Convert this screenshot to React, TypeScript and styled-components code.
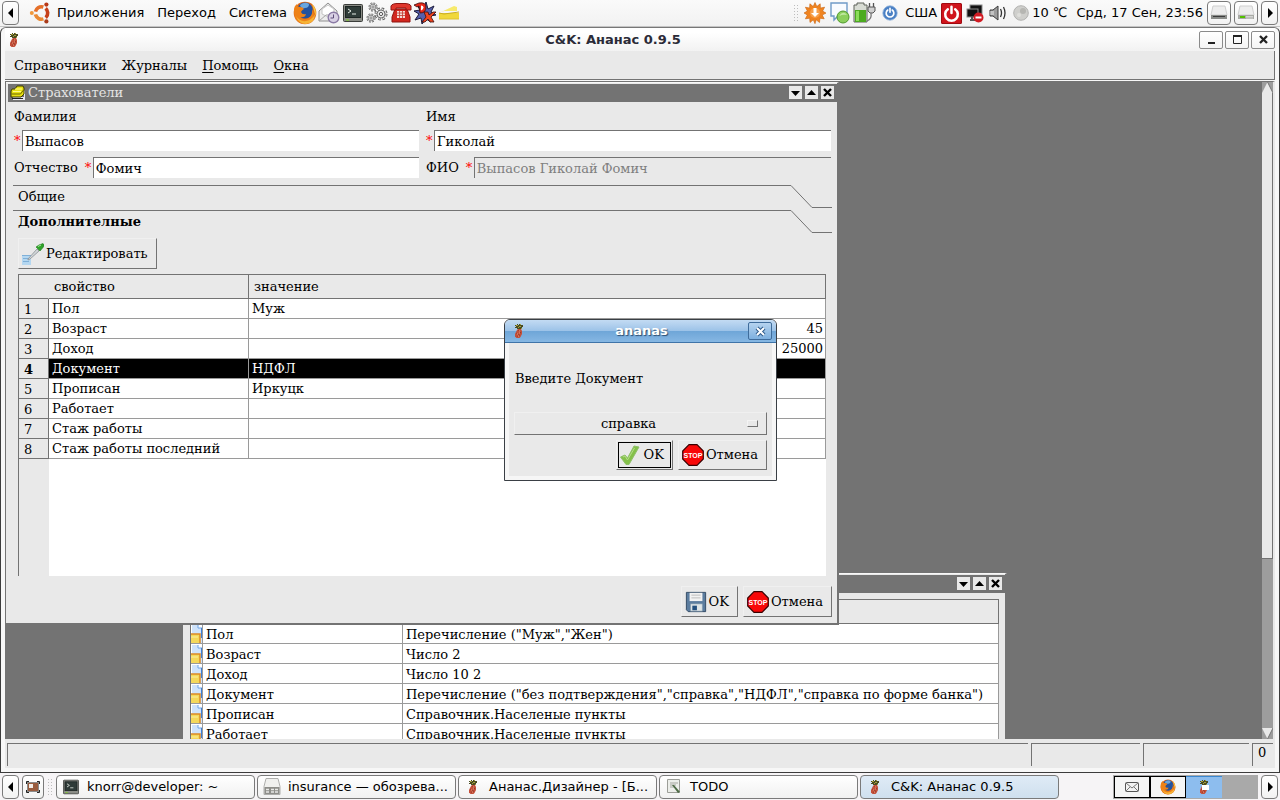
import React from "react";
import styled, { createGlobalStyle } from "styled-components";

const Global = createGlobalStyle`
  *, *::before, *::after { box-sizing: border-box; }
  body { margin: 0; background: #f5f5f5; }
  button, input, select { font: inherit; color: inherit; margin: 0; }
  button { cursor: pointer; }
  svg { display: block; flex: none; }
`;

const face = "#e9e9e9";
const shade = "#737373";
const grid = "#9a9a9a";
const sans = '"DejaVu Sans", sans-serif';
const serif = '"DejaVu Serif", serif';

/* ---------- desktop panels ---------- */

const Screen = styled.div`
  height: 100vh;
  display: flex;
  flex-direction: column;
  overflow: hidden;
  font: 13px/16px ${sans};
  color: #000;
`;

const Panel = styled.header`
  height: 27px;
  flex: none;
  display: flex;
  align-items: center;
  padding: 0 2px;
  background: linear-gradient(#fafafa, #f2f2f2);
  border-bottom: 1px solid #c4c4c4;
  white-space: nowrap;
`;

const TaskPanel = styled.footer`
  height: 27px;
  flex: none;
  display: flex;
  align-items: center;
  padding: 0 2px;
  background: #f6f4f6;
  white-space: nowrap;
`;

const Gap = styled.div`
  width: 3px;
  flex: none;
`;

const PanelButton = styled.button<{ $w: number }>`
  width: ${(p) => p.$w}px;
  height: 24px;
  flex: none;
  display: flex;
  align-items: center;
  justify-content: center;
  padding: 0;
  border: 1px solid #7a7a7a;
  border-radius: 4px;
  background: linear-gradient(#fff, #f2f2f2);
`;

const PanelMenu = styled.nav`
  display: flex;
  gap: 13px;
  padding-right: 6px;
`;

const MenuItem = styled.button`
  border: 0;
  padding: 0;
  background: none;
  u { text-underline-offset: 2px; }
`;

const Slot = styled.button<{ $w: number }>`
  width: ${(p) => p.$w}px;
  height: 24px;
  flex: none;
  display: flex;
  align-items: center;
  justify-content: center;
  border: 0;
  padding: 0;
  background: none;
`;

const Spacer = styled.div`
  flex: 1;
`;

const Grip = styled.div`
  width: 5px;
  height: 18px;
  flex: none;
  margin: 0 4px 0 3px;
  background: radial-gradient(circle, #bdbdbd 1px, transparent 1px) 0 0 / 3px 3px;
`;

const TrayText = styled.span<{ $before?: number; $after?: number }>`
  padding-left: ${(p) => p.$before ?? 0}px;
  padding-right: ${(p) => p.$after ?? 0}px;
`;

const Tasks = styled.div`
  flex: 1;
  display: flex;
  gap: 2px;
`;

const Task = styled.button<{ $active?: boolean }>`
  flex: 0 1 199px;
  height: 24px;
  min-width: 0;
  display: flex;
  align-items: center;
  gap: 8px;
  padding: 0 6px;
  text-align: left;
  border: 1px solid #7a7a7a;
  border-radius: 4px;
  background: ${(p) => (p.$active ? "linear-gradient(#dfebf6, #cfe0ee)" : "linear-gradient(#fff, #f1f1f1)")};
`;

const TaskIcon = styled.span`
  width: 16px;
  flex: none;
  display: flex;
  justify-content: center;
`;

const Pager = styled.div`
  display: flex;
  height: 24px;
  margin-right: 3px;
  padding: 1px 0 1px 1px;
  background: #a9a9a9;
`;

const Page = styled.button<{ $kind?: "active" | "empty" }>`
  width: 36px;
  display: flex;
  align-items: center;
  justify-content: center;
  padding: 0;
  border: ${(p) => (p.$kind ? "0" : "1px solid #000")};
  border-top: ${(p) => (p.$kind === "active" ? "1px solid #3b87cf" : p.$kind ? "0" : "1px solid #000")};
  background: ${(p) => (p.$kind === "active" ? "#8dbdee" : p.$kind === "empty" ? "#a9a9a9" : "#f5f5f5")};
`;

/* ---------- main window ---------- */

const MainWindow = styled.main`
  flex: 1;
  min-height: 0;
  display: flex;
  flex-direction: column;
  border: 1px solid #3c3c3c;
  border-top-color: #777;
  border-radius: 6px 6px 0 0;
  padding: 0 4px 4px;
  background: #f7f7f7;
`;

const MainTitle = styled.div`
  height: 23px;
  flex: none;
  display: flex;
  align-items: center;
  gap: 2px;
  background: linear-gradient(#fff 20%, #f2f2f2);
`;

const TitleText = styled.h1`
  flex: 1;
  margin: 0;
  padding-left: 4px;
  text-align: center;
  font-size: 13px;
  line-height: 16px;
  font-weight: bold;
  color: #2b2b38;
`;

const TitleButton = styled.button`
  width: 24px;
  height: 18px;
  display: flex;
  align-items: center;
  justify-content: center;
  padding: 0;
  border: 1px solid #8b8b8b;
  border-radius: 2px;
  background: linear-gradient(#fff, #f4f4f4);
`;

const MenuBar = styled.nav`
  height: 29px;
  flex: none;
  display: flex;
  align-items: center;
  gap: 15px;
  padding: 2px 9px 0;
  font-family: ${serif};
  background: ${face};
  border-right: 1px solid ${shade};
  border-bottom: 1px solid ${shade};
`;

const Workspace = styled.div`
  flex: 1;
  min-height: 0;
  display: flex;
  margin-top: 1px;
  border-top: 1px solid ${shade};
  border-left: 1px solid ${shade};
  border-right: 2px solid ${face};
  font-family: ${serif};
  background: ${shade};
`;

const Canvas = styled.div`
  flex: 1;
  position: relative;
  overflow: hidden;
`;

const ScrollBar = styled.div`
  width: 11px;
  flex: none;
  display: flex;
  flex-direction: column;
  justify-content: space-between;
  background: #9d9d9d;
`;

const Thumb = styled.div`
  flex: 0 0 71%;
  margin-bottom: auto;
  background: ${face};
  border-right: 1px solid ${shade};
  border-bottom: 1px solid ${shade};
`;

const StatusBar = styled.div`
  height: 29px;
  flex: none;
  display: flex;
  gap: 3px;
  padding: 4px 2px 2px;
  font-family: ${serif};
  background: ${face};
`;

const StatusCell = styled.div<{ $w?: number }>`
  flex: ${(p) => (p.$w ? `0 0 ${p.$w}px` : "1")};
  border-top: 1px solid ${shade};
  border-left: 1px solid ${shade};
  padding-left: 5px;
  line-height: 18px;
`;

/* ---------- inner windows ---------- */

const ChildWindow = styled.section<{ $x: number; $y: number; $w: number; $h: number }>`
  position: absolute;
  left: ${(p) => p.$x}px;
  top: ${(p) => p.$y}px;
  width: ${(p) => p.$w}px;
  height: ${(p) => p.$h}px;
  display: flex;
  flex-direction: column;
  padding: 1px 0 0 2px;
  background: ${face};
  border-top: 1px solid #f8f8f8;
  border-right: 2px solid ${shade};
  border-bottom: 2px solid ${shade};
`;

const ChildTitle = styled.div`
  height: 18px;
  flex: none;
  display: flex;
  align-items: center;
  gap: 3px;
  padding: 0 3px 1px 2px;
  color: #e4e4e4;
  background: ${shade};
`;

const ChildName = styled.h2`
  flex: 1;
  margin: 0;
  font-size: 13px;
  font-weight: normal;
  line-height: 16px;
`;

const ChildButton = styled.button`
  width: 13px;
  height: 13px;
  padding: 0;
  border: 0;
  background: ${face};
`;

const FormBody = styled.form`
  flex: 1;
  display: flex;
  flex-direction: column;
  padding: 4px 5px 6px 5px;
`;

const Fields = styled.div`
  display: grid;
  grid-template-columns: 1fr 1fr;
  gap: 6px 7px;
  padding: 0 1px;
`;

const Field = styled.div<{ $stack?: boolean }>`
  display: flex;
  flex-wrap: ${(p) => (p.$stack ? "wrap" : "nowrap")};
  align-items: center;
`;

const FieldLabel = styled.label<{ $stack?: boolean }>`
  flex: ${(p) => (p.$stack ? "0 0 100%" : "none")};
  line-height: 20px;
  padding-top: 1px;
  padding-right: 7px;
  padding-bottom: ${(p) => (p.$stack ? 3 : 0)}px;
`;

const Star = styled.span`
  flex: none;
  width: 8px;
  line-height: 20px;
  color: #ff0000;
`;

const TextBox = styled.input`
  flex: 1;
  min-width: 0;
  height: 21px;
  padding: 1px 2px 0;
  border: 0;
  border-top: 1px solid ${shade};
  border-left: 1px solid ${shade};
  border-radius: 0;
  outline: 0;
  background: #fff;
  &:disabled {
    color: #7f7f7f;
    background: ${face};
  }
`;

const ToolBox = styled.div`
  padding-top: 7px;
`;

const ToolTab = styled.button<{ $open?: boolean }>`
  width: 100%;
  height: 25px;
  display: flex;
  padding: 0;
  border: 0;
  text-align: left;
  font-weight: ${(p) => (p.$open ? "bold" : "normal")};
  background: none;
`;

const ToolTabText = styled.span`
  flex: 1;
  padding-left: 5px;
  line-height: 22px;
  border-top: 1px solid ${shade};
`;

const ToolPage = styled.div`
  flex: 1;
  display: flex;
  flex-direction: column;
  align-items: flex-start;
  gap: 5px;
  padding: 3px 6px 0 5px;
`;

const PushButton = styled.button<{ $tall?: boolean }>`
  height: ${(p) => (p.$tall ? 31 : 30)}px;
  display: flex;
  align-items: center;
  gap: 2px;
  padding: 0 8px 0 3px;
  border: 1px solid ${shade};
  border-top-color: #f0f0f0;
  border-left-color: #f0f0f0;
  background: ${face};
`;

const DefaultButton = styled(PushButton)`
  outline: 1px solid #000;
  outline-offset: -3px;
  gap: 4px;
`;

const ButtonRow = styled.div<{ $pad?: number }>`
  display: flex;
  justify-content: flex-end;
  gap: 5px;
  padding-top: ${(p) => p.$pad ?? 0}px;
`;

/* ---------- tables ---------- */

const TableArea = styled.div`
  flex: 1;
  align-self: stretch;
  border-top: 1px solid ${shade};
  border-left: 1px solid ${shade};
  background: linear-gradient(90deg, ${face} 30px, #fff 30px);
`;

const Table = styled.table`
  width: 100%;
  table-layout: fixed;
  border-collapse: separate;
  border-spacing: 0;
`;

const HeadCell = styled.th<{ $w?: number }>`
  width: ${(p) => (p.$w ? `${p.$w}px` : "auto")};
  height: 24px;
  padding: 0 5px;
  text-align: left;
  font-weight: normal;
  background: ${face};
  border-right: 1px solid ${shade};
  border-bottom: 1px solid ${shade};
`;

const CornerCell = styled(HeadCell)`
  border-color: ${face} ${face} ${shade};
`;

const RowHead = styled.th<{ $on?: boolean }>`
  height: 20px;
  padding: 2px 5px 0;
  text-align: left;
  line-height: 16px;
  font-weight: ${(p) => (p.$on ? "bold" : "normal")};
  background: ${face};
  border-right: 1px solid ${shade};
  border-bottom: 1px solid ${shade};
`;

const Cell = styled.td<{ $on?: boolean; $right?: boolean }>`
  height: 20px;
  padding: 0 2px 0 3px;
  line-height: 19px;
  white-space: nowrap;
  text-align: ${(p) => (p.$right ? "right" : "left")};
  color: ${(p) => (p.$on ? "#fff" : "#000")};
  background: ${(p) => (p.$on ? "#000" : "#fff")};
  border-right: 1px solid ${grid};
  border-bottom: 1px solid ${grid};
`;

const ListCell = styled(Cell)`
  padding-top: 2px;
  line-height: 17px;
`;

const IconCell = styled(Cell)`
  padding: 0;
`;

const ListBody = styled.div`
  margin: 6px 6px 0 5px;
  border-top: 1px solid ${shade};
  border-left: 1px solid ${shade};
`;

/* ---------- dialog ---------- */

const Dialog = styled.div`
  position: fixed;
  left: 504px;
  top: 319px;
  width: 273px;
  border: 1px solid #3a3f45;
  border-radius: 6px 6px 0 0;
  overflow: hidden;
  background: #f6f6f6;
`;

const DialogTitle = styled.div`
  height: 23px;
  display: flex;
  align-items: center;
  padding: 0 4px 0 8px;
  background: linear-gradient(#c3dbf3 0, #9dc3e8 48%, #6fa6d8 52%, #86b7e3);
  border-bottom: 1px solid #3f74a8;
`;

const DialogName = styled.h2`
  flex: 1;
  margin: 0;
  padding-left: 10px;
  text-align: center;
  font-size: 13px;
  line-height: 16px;
  color: #fff;
  text-shadow: 1px 1px 1px #2b4c70;
`;

const DialogClose = styled.button`
  width: 24px;
  height: 18px;
  display: flex;
  align-items: center;
  justify-content: center;
  padding: 0;
  border: 1px solid #3f6c9b;
  border-radius: 2px;
  background: linear-gradient(#b5d3ef, #7db0df);
`;

const DialogBody = styled.form`
  margin: 0 4px 4px;
  padding: 28px 5px 6px 5px;
  font-family: ${serif};
  background: ${face};
`;

const Prompt = styled.label`
  display: block;
  padding: 0 1px;
  margin-bottom: 25px;
`;

const SelectBox = styled.div`
  position: relative;
`;

const Select = styled.select`
  display: block;
  width: 100%;
  height: 23px;
  padding: 0 24px 0 0;
  appearance: none;
  text-align: center;
  text-align-last: center;
  border: 1px solid ${shade};
  border-top-color: #f0f0f0;
  border-left-color: #f0f0f0;
  border-radius: 0;
  background: ${face};
`;

const SelectMark = styled.span`
  position: absolute;
  right: 9px;
  top: 8px;
  width: 11px;
  height: 7px;
  pointer-events: none;
  border: 1px solid ${shade};
  border-top-color: #f4f4f4;
  border-left-color: #f4f4f4;
`;

/* ---------- icons ---------- */

const Pineapple = () => (
  <svg width="12" height="16" viewBox="0 0 12 16">
    <path d="M2 2h2V1h1v1h1V1h2v1h2v2H9v2H4V5H2V4h1V3H2z" fill="#4a4c22" />
    <path d="M3 2h2v1H3zM6 3h2v1H6zM5 4h1v1H5zM7 1h1v1H7zM8 5h1v1H8z" fill="#a5a03a" />
    <path d="M4 7l1-1h3l1 2v3l-1.500 3-1 1H3.500L2 13.500V11z" fill="#c4503a" />
    <path d="M3 10l4 3M5 7l3 3M8 9l-4 5" stroke="#8c3628" strokeWidth=".6" />
    <path d="M4 11h1M6 10h1M5 13h1M6 8h1" stroke="#f0997a" />
  </svg>
);

const Triangle = ({ dir }: { dir: "left" | "right" }) => (
  <svg width="6" height="10" viewBox="0 0 6 10">
    <path d={dir === "left" ? "M5 0v10L0 5z" : "M1 0v10l5-5z"} />
  </svg>
);

const Ubuntu = () => (
  <svg width="22" height="22" viewBox="0 0 22 22">
    {[
      [192, "#e5702a"],
      [312, "#c6401a"],
      [72, "#ea8a34"],
    ].map(([angle, color]) => (
      <circle
        key={color}
        cx="12.500"
        cy="11"
        r="6.200"
        fill="none"
        stroke={color as string}
        strokeWidth="3.600"
        pathLength={360}
        strokeDasharray="96 264"
        transform={`rotate(${angle} 12.500 11)`}
      />
    ))}
    <circle cx="2.800" cy="11" r="2" fill="#f0983c" />
    <circle cx="17.400" cy="2.600" r="2.100" fill="#b93a18" />
    <circle cx="17.400" cy="19.400" r="2.100" fill="#a93c1c" />
  </svg>
);

const Firefox = ({ size = 24 }: { size?: number }) => (
  <svg width={size} height={size} viewBox="0 0 24 24">
    <circle cx="12" cy="12" r="11.300" fill="#e06a18" />
    <circle cx="12" cy="9.500" r="8" fill="#24529e" />
    <path d="M7 4q5-4 9-1 0 4-4 4-4 1-5-3z" fill="#6aa6de" />
    <path d="M1 9q0-4 3-6 0 3 3 3 3 0 4 2-2 1-3 3 1 3 5 2-1 4-6 3 4 4 9 1 4-3 3-9 3 5 1 9-3 6-9 6Q1 22 1 9z" fill="#ee8218" />
    <path d="M3 15q4 6 10 5 6-1 9-7 0 9-9 10-7 0-10-8z" fill="#f6b436" />
    <path d="M19 3q5 5 3.500 12Q21 9 19 3z" fill="#f8c840" />
  </svg>
);

const MailClock = () => (
  <svg width="22" height="22" viewBox="0 0 22 22">
    <path d="M1 9L10 1l9 8v10H1z" fill="#ececec" stroke="#8f8f8f" />
    <path d="M4 7l6-4 6 4v5l-6 3-6-3z" fill="#fff" stroke="#c5c5c5" />
    <path d="M1 19l7-6h4l7 6" fill="none" stroke="#a5a5a5" />
    <circle cx="15.500" cy="15.500" r="5.300" fill="#d8d0e4" stroke="#8b7ba5" strokeWidth="1.400" />
    <path d="M15.500 12.500v3.500h-3" stroke="#5d4c78" fill="none" />
  </svg>
);

const Terminal = ({ size = 20 }: { size?: number }) => (
  <svg width={size} height={size} viewBox="0 0 20 20">
    <rect x=".5" y="1.500" width="19" height="17" rx="1" fill="#8b8d87" stroke="#3b3d3a" />
    <rect x="2.500" y="3.500" width="15" height="11" fill="#2f3b38" stroke="#1d2523" />
    <path d="M5 6l3 2-3 2M9 11h4" stroke="#e6eee6" fill="none" />
    <path d="M3 17h3" stroke="#7ed321" />
  </svg>
);

const Gear = ({ x, y, s }: { x: number; y: number; s: number }) => (
  <g transform={`translate(${x} ${y}) scale(${s})`}>
    <circle r="5" fill="none" stroke="#5a5a5a" strokeWidth="3" strokeDasharray="2.300 1.630" />
    <circle r="5" fill="none" stroke="#e2e2e2" strokeWidth="1.400" strokeDasharray="1.500 2.430" strokeDashoffset="-.4" />
    <circle r="4" fill="#e7e7e7" stroke="#666" strokeWidth=".9" />
    <circle r="1.600" fill="#fff" stroke="#555" />
  </g>
);

const Gears = () => (
  <svg width="22" height="22" viewBox="0 0 22 22">
    <Gear x={7} y={5} s={0.7} />
    <Gear x={5} y={16} s={0.7} />
    <Gear x={15} y={12} s={1} />
  </svg>
);

const Phone = () => (
  <svg width="22" height="20" viewBox="0 0 22 20">
    <path d="M5 6h12l3 8v5H2v-5z" fill="#d2271f" stroke="#8e1510" />
    <path d="M1 3q1-3 10-2.500 9-.5 10 2.500v4h-5V5H6v2H1z" fill="#e0382e" stroke="#8e1510" />
    <rect x="7" y="8" width="8" height="7" fill="#f6dcd8" />
    <path d="M7 10h8M7 12.500h8M9.500 8v7M12.500 8v7" stroke="#c03a30" strokeWidth=".8" />
  </svg>
);

const Burst = () => (
  <svg width="24" height="24" viewBox="0 0 24 24">
    <path d="M4 4l6 4 3-7 2 7 6-3-3 6 5 3-6 1 1 6-5-3-4 5-1-6-6 2 4-6-5-3 6-1z" fill="#5560ae" stroke="#1c1c3c" />
    <path d="M1 4l5-2q7-1 7 4 0 6-6 6L6 5 4 6z" fill="#e8281a" stroke="#3a0c0c" strokeWidth=".8" />
    <path d="M8 4.500v5q2.500-1 2.500-3T8 4.500z" fill="#fff" />
    <path d="M11 11l4 0 1 3 4-3h3l-5 5 3 5h-4l-2-3-3 3h-3l4-5z" fill="#f0441e" stroke="#3a0c0c" strokeWidth=".8" />
  </svg>
);

const Note = () => (
  <svg width="22" height="16" viewBox="0 0 22 16">
    <path d="M1 8l15-7 3 1v4H6z" fill="#f7ea6c" />
    <path d="M1 8h20v6H1z" fill="#f0d83a" />
    <path d="M1 8l5 1 15-2" stroke="#c9ae22" fill="none" />
    <path d="M1 14h20" stroke="#dcc030" />
  </svg>
);

const Update = () => (
  <svg width="22" height="22" viewBox="0 0 22 22">
    <path d="M11 .5l1.800 4 3.400-2.700.2 4.300 4.200-.9-2 3.900 3.400 2-3.800 1.900 2 3.800-4.300-.6-.4 4.300-3.300-2.700L11 21.700l-1.700-3.900L6 20.500l-.3-4.300-4.300.6 2-3.800L0 11l3.400-2-2-3.800 4.200.9.300-4.300 3.300 2.700z" fill="#f08420" stroke="#c8620c" strokeWidth=".6" />
    <circle cx="11" cy="11" r="5" fill="#f7a04a" />
    <path d="M9.500 6h3v5H15l-4 4-4-4h2.500z" fill="#fff" />
  </svg>
);

const Chat = () => (
  <svg width="22" height="22" viewBox="0 0 22 22">
    <path d="M2 1h16v13H9l-4 4v-4H2z" fill="#f8fbff" stroke="#6f9bc8" strokeWidth="1.400" />
    <circle cx="14" cy="15" r="6" fill="#8ccf5c" stroke="#4f9a2c" />
    <path d="M10 14q4-6 8-1-4-1-8 1z" fill="#c0e8a0" />
  </svg>
);

const Battery = () => (
  <svg width="24" height="22" viewBox="0 0 24 22">
    <path d="M4 1h7v2h3v17H1V3h3z" fill="#d8dcd4" stroke="#5e625a" />
    <rect x="2" y="8" width="11" height="12" fill="#4cab20" />
    <path d="M3 9h3v10H3z" fill="#8bdc5a" />
    <path d="M15 5h7v4l-2 2h-3l-2-2z" fill="#d0d0d0" stroke="#555" />
    <path d="M18 11q1 6-4 8" fill="none" stroke="#777" strokeWidth="1.300" />
    <path d="M16.500 5V1M20.500 5V1" stroke="#555" strokeWidth="1.300" />
  </svg>
);

const PowerGlyph = ({ stroke, w }: { stroke: string; w: number }) => (
  <g fill="none" stroke={stroke} strokeWidth={w} strokeLinecap="round">
    <path d="M6.500 6A6 6 0 1 0 13.500 6" />
    <path d="M10 3.500v6" />
  </g>
);

const PowerBlue = () => (
  <svg width="16" height="16" viewBox="0 0 20 20">
    <circle cx="10" cy="10" r="9" fill="#4a80c4" stroke="#8fb2dc" />
    <g transform="translate(2 1.500) scale(.8)"><PowerGlyph stroke="#fff" w={2.6} /></g>
  </svg>
);

const PowerRed = () => (
  <svg width="21" height="21" viewBox="0 0 20 20">
    <rect x=".5" y=".5" width="19" height="19" rx="1" fill="#d0141c" stroke="#a00a10" />
    <PowerGlyph stroke="#fff" w={2.4} />
  </svg>
);

const Network = () => (
  <svg width="18" height="19" viewBox="0 0 18 19">
    <rect x="4" y="1" width="12" height="9" fill="#111" stroke="#8a8a8a" />
    <rect x="1" y="5" width="11" height="8" fill="#111" stroke="#8a8a8a" />
    <path d="M4 16h6M6 13v3" stroke="#555" strokeWidth="2" />
    <circle cx="12.500" cy="13.500" r="5" fill="#d11a22" />
    <path d="M9.500 13.500h6" stroke="#fff" strokeWidth="2" />
  </svg>
);

const Speaker = () => (
  <svg width="17" height="16" viewBox="0 0 17 16">
    <path d="M1 5h3l5-4v14l-5-4H1z" fill="#9c9c9c" stroke="#3a3a3a" />
    <path d="M2 6v4M4 6v4" stroke="#fff" strokeWidth=".8" />
    <path d="M11.500 4q2 4 0 8M14.500 2q3 6 0 12" fill="none" stroke="#333" strokeWidth="1.300" />
  </svg>
);

const Moon = () => (
  <svg width="16" height="16" viewBox="0 0 16 16">
    <circle cx="8" cy="8" r="7.300" fill="#cfcfcc" stroke="#b2b2b0" />
    <circle cx="10" cy="6" r="3" fill="#b6b6b2" />
    <circle cx="6" cy="10" r="2" fill="#dededb" />
  </svg>
);

const Drive = ({ light }: { light?: boolean }) => (
  <svg width="18" height="16" viewBox="0 0 18 16">
    <path d="M3 1h12l2 9H1z" fill="#ededed" stroke="#cfcfcf" />
    <path d="M1 10h16v4H1z" fill={light ? "#a9aba6" : "#8a8c89"} />
    <path d={light ? "M9 11.500h7M9 13h7" : "M3 11.500h12"} stroke={light ? "#d5d5d5" : "#3c3c3c"} />
    {light && <path d="M3 12h5" stroke="#52c000" strokeWidth="2" />}
  </svg>
);

const ShowDesktop = () => (
  <svg width="14" height="12" viewBox="0 0 14 12">
    <rect x="1.500" y="1.500" width="11" height="9" fill="#9a5c3e" stroke="#8a8a8a" />
    <path d="M.5 3V.500H3M11 .500h2.500V3M13.500 9v2.500H11M3 11.500H.500V9" fill="none" stroke="#222" />
    <rect x="3" y="3" width="4" height="4" fill="#f3ece6" />
  </svg>
);

const Cabinet = () => (
  <svg width="18" height="17" viewBox="0 0 18 17">
    <path d="M3 .500h12l2 8v8H1v-8z" fill="#f0f0ee" stroke="#aeaeac" />
    <path d="M1.500 9h15v7h-15z" fill="#8e8e8a" />
    <path d="M3 11.500h3M8 11.500h3M12 11.500h3M3 14h3M8 14h3M12 14h3" stroke="#e9e9e7" strokeWidth="1.500" />
  </svg>
);

const Editor = () => (
  <svg width="14" height="15" viewBox="0 0 14 15">
    <path d="M.5.500h12v13H.5z" fill="#eceeea" stroke="#9c9e98" />
    <path d="M3 4h8M3 6h6M3 8h4" stroke="#a4a69f" />
    <path d="M5 6l6 8 2-1-6-7z" fill="#4c6a44" />
  </svg>
);

const Envelope = () => (
  <svg width="14" height="10" viewBox="0 0 14 10">
    <rect x=".5" y=".5" width="13" height="9" rx="1" fill="#f2f2f2" stroke="#555" />
    <path d="M1 1l6 5 6-5M1 9l4-4M13 9L9 5" fill="none" stroke="#777" />
  </svg>
);

const Folder = () => (
  <svg width="15" height="15" viewBox="0 0 15 15">
    <path d="M3 12h11V5l1 1v9H3z" fill="#e6e6f2" />
    <path d="M2 4l3 0 2-3h6l1 2v6l-3 3H1V6z" fill="#e8e012" stroke="#3c3a00" />
    <path d="M5 4h7M3 6.500h8" stroke="#fffb8a" />
    <path d="M1.500 9h9l3-4" fill="none" stroke="#6a6600" />
    <path d="M2 13.500h11" stroke="#222" />
  </svg>
);

const Dropper = () => (
  <svg width="22" height="22" viewBox="0 0 22 22">
    <rect x="0" y="12" width="9" height="10" fill="#b5d7f0" />
    <path d="M0 12.500h9M1 15.500h6M1 18.500h6" stroke="#7fb0d8" />
    <path d="M6 16l9-10 2 2-9 8-2 1z" fill="#d2d6d8" stroke="#8a9094" strokeWidth=".8" />
    <path d="M14 4l3-2 4-1.500q2 1 0 4l-3 3.500z" fill="#2fa32a" stroke="#1c7a1a" strokeWidth=".6" />
    <path d="M16 3.500l3-1.500" stroke="#a6e89a" />
  </svg>
);

const Floppy = () => (
  <svg width="22" height="22" viewBox="0 0 24 24">
    <path d="M1.500 1.500h21v21h-19l-2-2z" fill="#5c7d9f" stroke="#2f4660" />
    <rect x="5" y="2" width="14" height="9" fill="#f2f2f2" />
    <path d="M7 4.500h10M7 7.500h10" stroke="#b9b9b9" />
    <path d="M6 14h13v8H6z" fill="#dfe5e6" stroke="#7d95a8" strokeWidth=".6" />
    <rect x="8" y="16" width="5" height="5" fill="#24507e" />
  </svg>
);

const Check = () => (
  <svg width="20" height="22" viewBox="0 0 20 22">
    <path d="M0.500 13l4.500-2 2.500 3L14 2l5 1L9 20.500H6z" fill="#84c04a" stroke="#8fbf6a" />
    <path d="M3 13l2-1 2.500 4 7-12" fill="none" stroke="#b4de88" />
  </svg>
);

const StopWord = styled.text`
  font: bold 7px "Liberation Sans Narrow", "Liberation Sans", sans-serif;
  fill: #fff;
`;

const Stop = () => (
  <svg width="22" height="22" viewBox="0 0 22 22">
    <path d="M7 .700h8L21.300 7v8L15 21.300H7L.700 15V7z" fill="#f80808" stroke="#3a0000" strokeWidth="1.200" />
    <StopWord x="11" y="14" textAnchor="middle">STOP</StopWord>
  </svg>
);

const DocIcon = () => (
  <svg width="11" height="19" viewBox="0 0 11 19">
    <path d="M1 1h6l4 3v15H1z" fill="#cfe3fa" />
    <path d="M7 1v3h4" fill="#fff" stroke="#6ca3e6" />
    <path d="M10.500 4v10" stroke="#3e7fd4" />
    <rect x="0" y="10" width="9" height="9" fill="#f4d85a" />
    <path d="M0 10h9v9" fill="none" stroke="#dd8b26" strokeWidth="1.500" />
    <path d="M0 13h7" stroke="#fbeea0" />
  </svg>
);

const ChildControls = () => (
  <>
    <ChildButton type="button" aria-label="Свернуть">
      <svg width="13" height="13" viewBox="0 0 13 13"><path d="M2 5h9l-4.500 5z" /></svg>
    </ChildButton>
    <ChildButton type="button" aria-label="Развернуть">
      <svg width="13" height="13" viewBox="0 0 13 13"><path d="M2 9h9L6.500 4z" /></svg>
    </ChildButton>
    <ChildButton type="button" aria-label="Закрыть">
      <svg width="13" height="13" viewBox="0 0 13 13"><path d="M3 3l7 7M10 3l-7 7" stroke="#000" strokeWidth="2.400" /></svg>
    </ChildButton>
  </>
);

const Fold = () => (
  <svg width="41" height="24" viewBox="0 0 41 24">
    <path d="M0 .5L21 22.500H41" fill="none" stroke={shade} />
  </svg>
);

/* ---------- data ---------- */

const properties: { name: string; value: string; num?: boolean }[] = [
  { name: "Пол", value: "Муж" },
  { name: "Возраст", value: "45", num: true },
  { name: "Доход", value: "25000", num: true },
  { name: "Документ", value: "НДФЛ" },
  { name: "Прописан", value: "Иркуцк" },
  { name: "Работает", value: "" },
  { name: "Стаж работы", value: "" },
  { name: "Стаж работы последний", value: "" },
];

const types = [
  ["Пол", 'Перечисление ("Муж","Жен")'],
  ["Возраст", "Число 2"],
  ["Доход", "Число 10 2"],
  ["Документ", 'Перечисление ("без подтверждения","справка","НДФЛ","справка по форме банка")'],
  ["Прописан", "Справочник.Населеные пункты"],
  ["Работает", "Справочник.Населеные пункты"],
];

const tasks = [
  { title: "knorr@developer: ~", icon: <Terminal size={16} /> },
  { title: "insurance — обозрева...", icon: <Cabinet /> },
  { title: "Ананас.Дизайнер - [Б...", icon: <Pineapple /> },
  { title: "TODO", icon: <Editor /> },
  { title: "C&K: Ананас 0.9.5", icon: <Pineapple />, active: true },
];

export default function App() {
  return (
    <Screen>
      <Global />
      <Panel>
        <PanelButton $w={17} aria-label="Скрыть панель"><Triangle dir="left" /></PanelButton>
        <Gap />
        <Slot $w={35} aria-label="Ubuntu"><Ubuntu /></Slot>
        <PanelMenu>
          <MenuItem>Приложения</MenuItem>
          <MenuItem>Переход</MenuItem>
          <MenuItem>Система</MenuItem>
        </PanelMenu>
        <Slot $w={24} aria-label="Firefox"><Firefox /></Slot>
        <Slot $w={24} aria-label="Почта"><MailClock /></Slot>
        <Slot $w={24} aria-label="Терминал"><Terminal /></Slot>
        <Slot $w={24} aria-label="Настройки"><Gears /></Slot>
        <Slot $w={24} aria-label="Телефон"><Phone /></Slot>
        <Slot $w={24} aria-label="Dx"><Burst /></Slot>
        <Slot $w={24} aria-label="Заметки"><Note /></Slot>
        <Spacer />
        <Grip />
        <Slot $w={25} aria-label="Обновления"><Update /></Slot>
        <Slot $w={25} aria-label="Сообщения"><Chat /></Slot>
        <Slot $w={25} aria-label="Батарея"><Battery /></Slot>
        <Slot $w={25} aria-label="Питание"><PowerBlue /></Slot>
        <TrayText $before={3} $after={3}>США</TrayText>
        <Slot $w={23} aria-label="Выход"><PowerRed /></Slot>
        <Slot $w={23} aria-label="Сеть"><Network /></Slot>
        <Slot $w={23} aria-label="Громкость"><Speaker /></Slot>
        <Slot $w={23} aria-label="Погода"><Moon /></Slot>
        <TrayText>10 ℃</TrayText>
        <TrayText $before={9} $after={4}>Срд, 17 Сен, 23:56</TrayText>
        <PanelButton $w={24} aria-label="Диск 1"><Drive /></PanelButton>
        <Gap />
        <PanelButton $w={24} aria-label="Диск 2"><Drive light /></PanelButton>
        <Gap />
        <PanelButton $w={17} aria-label="Скрыть панель вправо"><Triangle dir="right" /></PanelButton>
      </Panel>

      <MainWindow>
        <MainTitle>
          <Slot $w={18} aria-label="Меню окна"><Pineapple /></Slot>
          <TitleText>C&amp;K: Ананас 0.9.5</TitleText>
          <TitleButton aria-label="Свернуть окно">
            <svg width="9" height="9" viewBox="0 0 9 9"><path d="M1 8h7" stroke="#222" strokeWidth="2" /></svg>
          </TitleButton>
          <TitleButton aria-label="Развернуть окно">
            <svg width="9" height="9" viewBox="0 0 9 9"><path d="M.5 1h8v7.500h-8z" fill="none" stroke="#222" /><path d="M0 1h9" stroke="#222" strokeWidth="2" /></svg>
          </TitleButton>
          <TitleButton aria-label="Закрыть окно">
            <svg width="9" height="9" viewBox="0 0 9 9"><path d="M1 1l7 7M8 1L1 8" stroke="#222" strokeWidth="2.300" /></svg>
          </TitleButton>
        </MainTitle>

        <MenuBar>
          <MenuItem>Справочники</MenuItem>
          <MenuItem>Журналы</MenuItem>
          <MenuItem><u>П</u>омощь</MenuItem>
          <MenuItem><u>О</u>кна</MenuItem>
        </MenuBar>

        <Workspace>
          <Canvas>
            <ChildWindow $x={177} $y={491} $w={824} $h={220}>
              <ChildTitle>
                <ChildName />
                <ChildControls />
              </ChildTitle>
              <ListBody>
                <Table>
                  <thead>
                    <tr>
                      <HeadCell $w={12} />
                      <HeadCell $w={200} />
                      <HeadCell />
                    </tr>
                  </thead>
                  <tbody>
                    {types.map(([name, type]) => (
                      <tr key={name}>
                        <IconCell><DocIcon /></IconCell>
                        <ListCell>{name}</ListCell>
                        <ListCell>{type}</ListCell>
                      </tr>
                    ))}
                  </tbody>
                </Table>
              </ListBody>
            </ChildWindow>

            <ChildWindow $x={0} $y={0} $w={833} $h={543}>
              <ChildTitle>
                <Folder />
                <ChildName>Страхователи</ChildName>
                <ChildControls />
              </ChildTitle>
              <FormBody onSubmit={(e) => e.preventDefault()}>
                <Fields>
                  <Field $stack>
                    <FieldLabel $stack htmlFor="surname">Фамилия</FieldLabel>
                    <Star>*</Star>
                    <TextBox id="surname" defaultValue="Выпасов" />
                  </Field>
                  <Field $stack>
                    <FieldLabel $stack htmlFor="name">Имя</FieldLabel>
                    <Star>*</Star>
                    <TextBox id="name" defaultValue="Гиколай" />
                  </Field>
                  <Field>
                    <FieldLabel htmlFor="patronymic">Отчество</FieldLabel>
                    <Star>*</Star>
                    <TextBox id="patronymic" defaultValue="Фомич" />
                  </Field>
                  <Field>
                    <FieldLabel htmlFor="fullname">ФИО</FieldLabel>
                    <Star>*</Star>
                    <TextBox id="fullname" disabled defaultValue="Выпасов Гиколай Фомич" />
                  </Field>
                </Fields>
                <ToolBox>
                  <ToolTab type="button"><ToolTabText>Общие</ToolTabText><Fold /></ToolTab>
                  <ToolTab type="button" $open><ToolTabText>Дополнителные</ToolTabText><Fold /></ToolTab>
                </ToolBox>
                <ToolPage>
                  <PushButton type="button" $tall><Dropper />Редактировать</PushButton>
                  <TableArea>
                    <Table>
                      <thead>
                        <tr>
                          <CornerCell $w={30} />
                          <HeadCell $w={200}>свойство</HeadCell>
                          <HeadCell>значение</HeadCell>
                        </tr>
                      </thead>
                      <tbody>
                        {properties.map((p, i) => {
                          const on = p.name === "Документ";
                          return (
                            <tr key={p.name}>
                              <RowHead scope="row" $on={on}>{i + 1}</RowHead>
                              <Cell $on={on}>{p.name}</Cell>
                              <Cell $on={on} $right={p.num}>{p.value}</Cell>
                            </tr>
                          );
                        })}
                      </tbody>
                    </Table>
                  </TableArea>
                </ToolPage>
                <ButtonRow $pad={10}>
                  <PushButton $tall><Floppy />OK</PushButton>
                  <PushButton type="button" $tall><Stop />Отмена</PushButton>
                </ButtonRow>
              </FormBody>
            </ChildWindow>
          </Canvas>
          <ScrollBar>
            <svg width="11" height="11" viewBox="0 0 11 11"><path d="M0 11L5.500 0 11 11z" fill={face} /><path d="M5.500 0L11 11" stroke={shade} /></svg>
            <Thumb />
            <svg width="11" height="11" viewBox="0 0 11 11"><path d="M0 0h11L5.500 11z" fill={face} /><path d="M5.500 11L11 0" stroke={shade} /></svg>
          </ScrollBar>
        </Workspace>

        <StatusBar>
          <StatusCell />
          <StatusCell $w={109} />
          <StatusCell $w={106} />
          <StatusCell $w={21}>0</StatusCell>
        </StatusBar>
      </MainWindow>

      <TaskPanel>
        <PanelButton $w={17} aria-label="Скрыть панель задач"><Triangle dir="left" /></PanelButton>
        <Gap />
        <PanelButton $w={22} aria-label="Показать рабочий стол"><ShowDesktop /></PanelButton>
        <Grip />
        <Tasks>
          {tasks.map((t) => (
            <Task key={t.title} $active={t.active}>
              <TaskIcon>{t.icon}</TaskIcon>
              {t.title}
            </Task>
          ))}
        </Tasks>
        <Pager>
          <Page aria-label="Рабочее место 1"><Envelope /></Page>
          <Page aria-label="Рабочее место 2"><Firefox size={16} /></Page>
          <Page $kind="active" aria-label="Рабочее место 3">
            <svg width="12" height="16" viewBox="0 0 12 16">
              <Pineapple />
              <path d="M4 6h7v5H4z" fill="#fff" />
            </svg>
          </Page>
          <Page $kind="empty" aria-label="Рабочее место 4" />
        </Pager>
        <PanelButton $w={17} aria-label="Скрыть панель задач вправо"><Triangle dir="right" /></PanelButton>
      </TaskPanel>

      <Dialog role="dialog" aria-label="ananas">
        <DialogTitle>
          <Pineapple />
          <DialogName>ananas</DialogName>
          <DialogClose aria-label="Закрыть диалог">
            <svg width="11" height="11" viewBox="0 0 11 11">
              <path d="M2 2l7 7M9 2L2 9" stroke="#2f5c8c" strokeWidth="4" />
              <path d="M2 2l7 7M9 2L2 9" stroke="#fff" strokeWidth="2" />
            </svg>
          </DialogClose>
        </DialogTitle>
        <DialogBody onSubmit={(e) => e.preventDefault()}>
          <Prompt htmlFor="doc">Введите Документ</Prompt>
          <SelectBox>
            <Select id="doc" defaultValue="справка">
              <option>без подтверждения</option>
              <option>справка</option>
              <option>НДФЛ</option>
              <option>справка по форме банка</option>
            </Select>
            <SelectMark />
          </SelectBox>
          <ButtonRow $pad={5}>
            <DefaultButton><Check />OK</DefaultButton>
            <PushButton type="button"><Stop />Отмена</PushButton>
          </ButtonRow>
        </DialogBody>
      </Dialog>
    </Screen>
  );
}
